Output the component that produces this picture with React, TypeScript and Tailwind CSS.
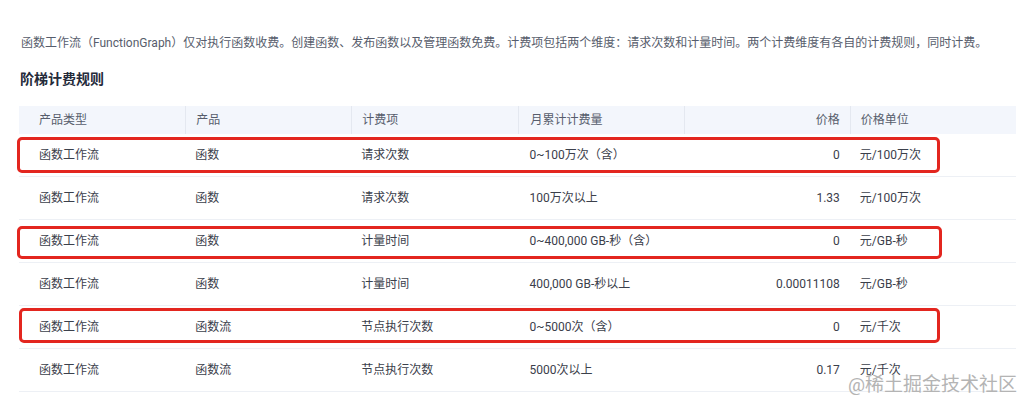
import React from "react";

const cols = ["产品类型", "产品", "计费项", "月累计计费量", "价格", "价格单位"];
const rows: string[][] = [
  ["函数工作流", "函数", "请求次数", "0~100万次（含）", "0", "元/100万次"],
  ["函数工作流", "函数", "请求次数", "100万次以上", "1.33", "元/100万次"],
  ["函数工作流", "函数", "计量时间", "0~400,000 GB-秒（含）", "0", "元/GB-秒"],
  ["函数工作流", "函数", "计量时间", "400,000 GB-秒以上", "0.00011108", "元/GB-秒"],
  ["函数工作流", "函数流", "节点执行次数", "0~5000次（含）", "0", "元/千次"],
  ["函数工作流", "函数流", "节点执行次数", "5000次以上", "0.17", "元/千次"],
];

const cellPad = ["pl-[20px] pr-[10px]", "px-[10px]", "px-[10px]", "pl-[12px] pr-[10px]", "px-[10px] text-right", "px-[10px]"];

export default function App() {
  return (
    <div
      className="relative w-[1032px] h-[411px] overflow-hidden bg-white"
      style={{ fontFamily: 'Roboto, "Noto Sans CJK SC", sans-serif' }}
    >
      <p className="pl-[21px] pt-[35px] text-[12px] leading-[16px] text-[#575d6c] whitespace-nowrap">
        函数工作流（FunctionGraph）仅对执行函数收费。创建函数、发布函数以及管理函数免费。计费项包括两个维度：请求次数和计量时间。两个计费维度有各自的计费规则，同时计费。
      </p>
      <h3 className="pl-[20px] mt-[18px] text-[14px] leading-[20px] font-bold text-[#252b3a]">阶梯计费规则</h3>
      <div className="relative ml-[19px] mt-[17px] w-[997px]">
        <div className="grid grid-cols-6 h-[28px] bg-[#f3f6fc] text-[12px] text-[#575d6c]">
          {cols.map((c, i) => (
            <div
              key={c}
              className={`flex items-center ${i > 0 ? "border-l border-[#e4e8f0]" : ""} ${cellPad[i]} ${i === 4 ? "justify-end" : ""}`}
            >
              {c}
            </div>
          ))}
        </div>
        {rows.map((r, ri) => (
          <div key={ri} className="grid grid-cols-6 h-[43px] border-b border-[#edf0f5] text-[12px] text-[#3b404b]">
            {r.map((c, i) => (
              <div key={i} className={`flex items-center whitespace-nowrap ${cellPad[i]} ${i === 4 ? "justify-end" : ""}`}>
                {c}
              </div>
            ))}
          </div>
        ))}
        <div className="absolute left-[-2px] top-[31px] w-[923px] h-[36px] border-[3px] border-[#e3261f] rounded-[5px]" />
        <div className="absolute left-[-2px] top-[120px] w-[925px] h-[33px] border-[3px] border-[#e3261f] rounded-[5px]" />
        <div className="absolute left-[0px] top-[202px] w-[921px] h-[35px] border-[3px] border-[#e3261f] rounded-[5px]" />
      </div>
      <div className="absolute right-[15px] top-[373px] text-[19px] leading-[24px] text-[#b4b4b4] whitespace-nowrap">
        @稀土掘金技术社区
      </div>
    </div>
  );
}
